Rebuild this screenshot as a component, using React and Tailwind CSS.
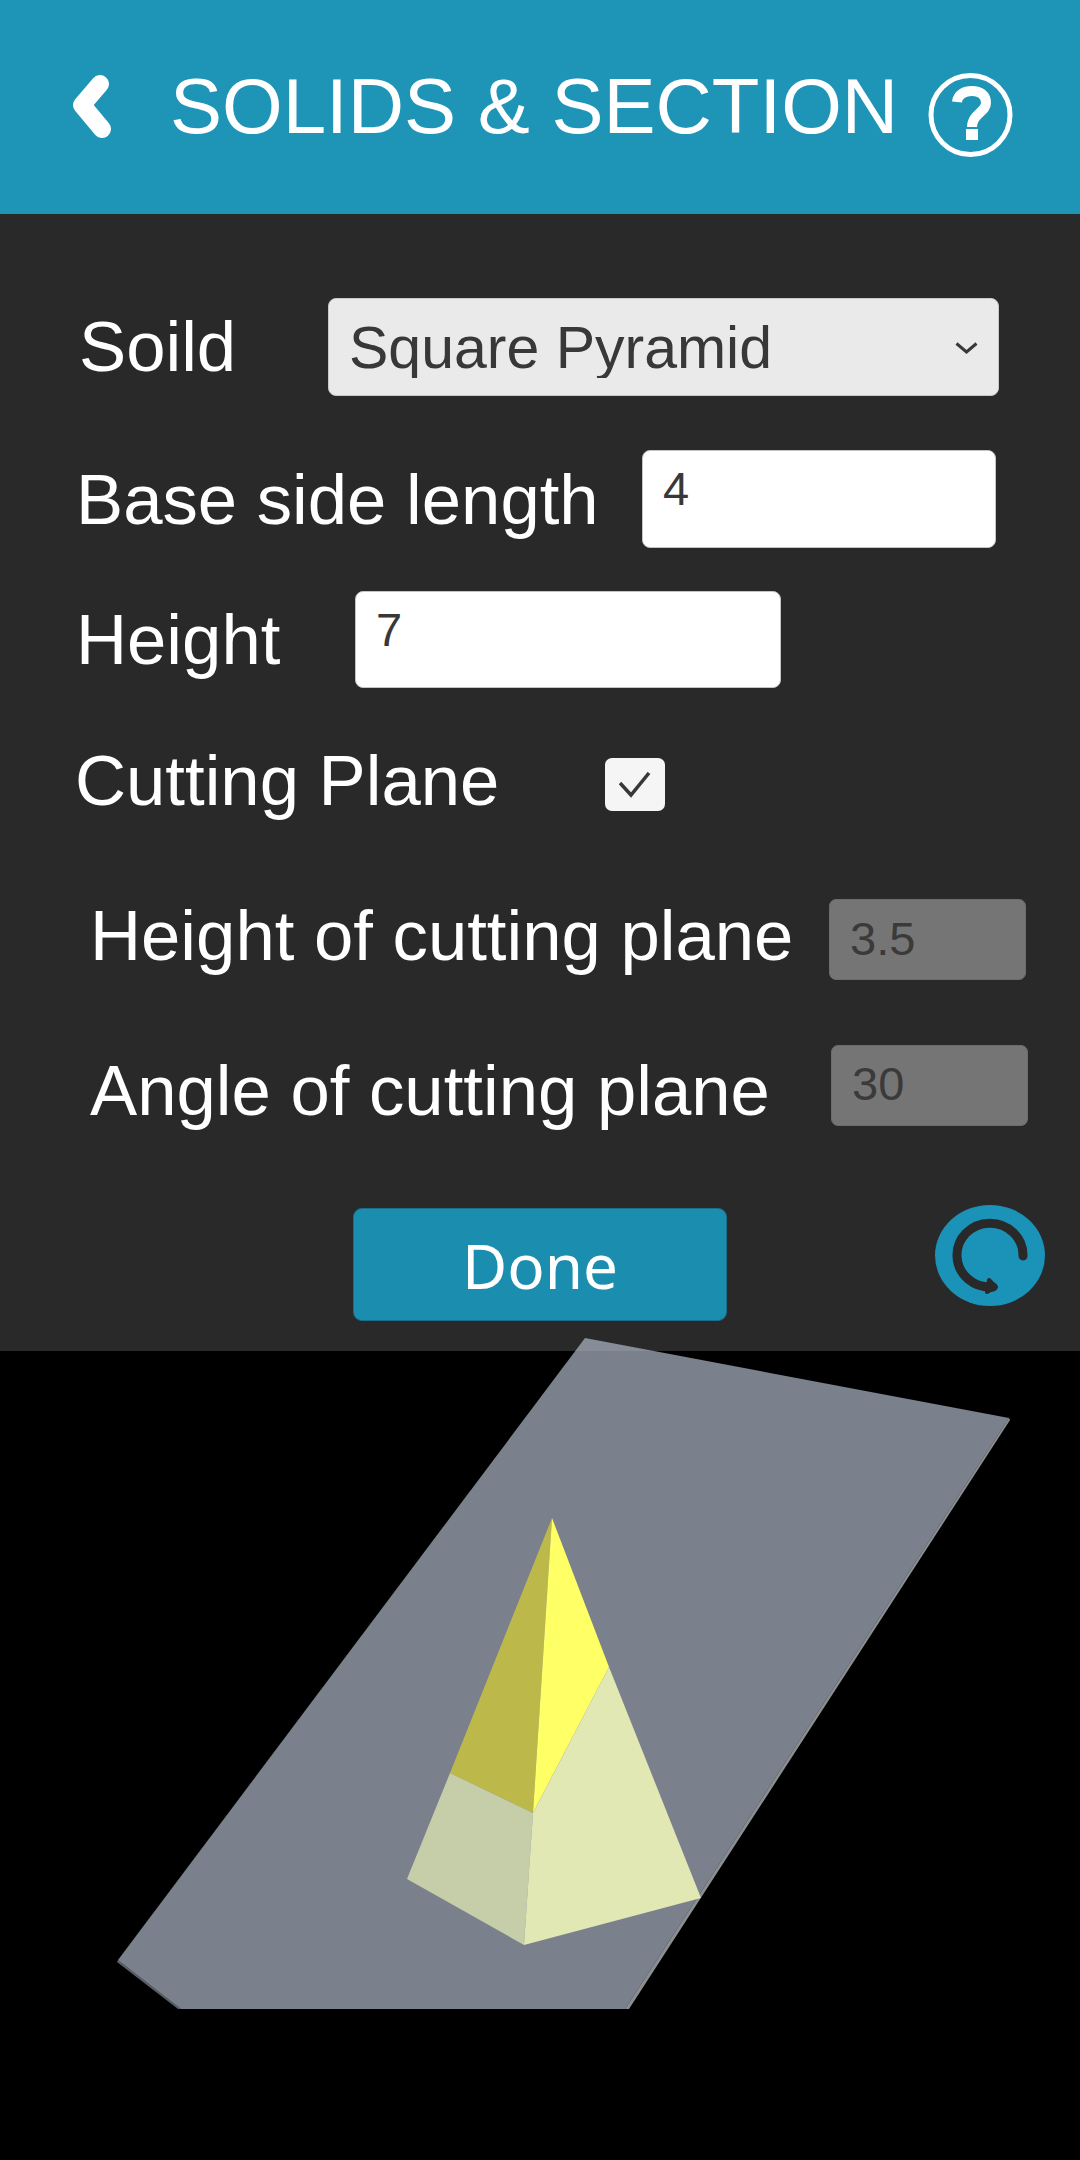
const fieldClass = "rounded-[8px] border border-[#c4c4c4] bg-white pl-[20px] text-[47px] leading-none text-[#383838] outline-none";
const disabledClass = "h-[81px] w-[197px] rounded-[7px] border border-[#6c6c6c] bg-[#757575] pl-[20px] text-[47px] leading-none text-[#3a3a3a] outline-none";

function BackIcon() {
  return (
    <svg className="ml-[70px] h-[70px] w-[44px] shrink-0" viewBox="0 0 44 70" fill="none">
      <path d="M30 12 L12 33 L32 57" stroke="#fff" strokeWidth="18" strokeLinecap="round" strokeLinejoin="round" />
    </svg>
  );
}

function HelpIcon() {
  return (
    <svg className="ml-[30px] mt-[16px] h-[85px] w-[85px] shrink-0" viewBox="0 0 85 85" fill="none">
      <circle cx="42.5" cy="42" r="39.5" stroke="#fff" strokeWidth="5" />
      <path d="M29 29 C30 21 37 18 44 18 C52 18 58 22 58 30 C58 39 44 41 44 54" stroke="#fff" strokeWidth="10" />
      <rect x="38" y="56" width="12" height="11" fill="#fff" />
    </svg>
  );
}

function ResetIcon() {
  return (
    <svg className="ml-[208px] mt-[-3px] h-[101px] w-[110px] shrink-0" viewBox="0 0 110 101" fill="none">
      <ellipse cx="55" cy="50.5" rx="55" ry="50.5" fill="#1b92b7" />
      <path d="M88 51 A33 32 0 1 0 58 82" stroke="#292929" strokeWidth="9" strokeLinecap="round" />
      <path d="M54 75 L61 82 L52 87 Z" fill="#292929" stroke="#292929" strokeWidth="4" strokeLinejoin="round" />
    </svg>
  );
}

function Scene() {
  return (
    <svg className="absolute left-0 top-[-13px] h-[680px] w-[1080px]" viewBox="0 1338 1080 680">
      <polygon points="118,1960 181,2009 178,2009 117,1962" fill="#5a5e66" />
      <polygon points="1009,1418 1010,1420 629,2009 625,2009" fill="#8b8e90" />
      <polygon points="585,1338 1009,1418 625,2009 181,2009 118,1960" fill="rgb(174,183,200)" fillOpacity="0.7" />
      <polygon points="552,1518 450,1773 533,1813" fill="#bdb84a" />
      <polygon points="552,1518 609,1667 533,1813" fill="#ffff66" />
      <polygon points="450,1773 533,1813 524,1945 407,1879" fill="#c6cda9" />
      <polygon points="533,1813 609,1667 701,1898 524,1945" fill="#e1e8b4" />
    </svg>
  );
}

export default function App() {
  return (
    <div className="flex min-h-[2160px] flex-col bg-black font-['Liberation_Sans',Arial,sans-serif] text-white">
      <header className="flex h-[214px] items-center bg-[#1e94b7]">
        <BackIcon />
        <h1 className="ml-[56px] pb-[2px] text-[78px] font-normal leading-none whitespace-nowrap">SOLIDS &amp; SECTION</h1>
        <HelpIcon />
      </header>

      <section className="bg-[#292929] pb-[30px] pt-[84px] text-[70.7px] leading-none">
        <div className="flex h-[98px] items-center">
          <span className="ml-[79px] w-[249px]">Soild</span>
          <div className="relative h-[98px] w-[671px]">
            <select defaultValue="Square Pyramid" className="h-full w-full appearance-none rounded-[8px] border border-[#c8c8c8] bg-[#eaeaea] pl-[20px] pt-[2px] text-[59px] leading-none text-[#383838] outline-none">
              <option>Square Pyramid</option>
            </select>
            <svg className="absolute right-[21px] top-[44px] h-[12px] w-[23px]" viewBox="0 0 23 12" fill="none">
              <path d="M1.5 1.5 L11.5 10 L21.5 1.5" stroke="#383838" strokeWidth="3" />
            </svg>
          </div>
        </div>

        <div className="mt-[54px] flex h-[98px] items-center">
          <span className="ml-[76px] w-[566px] whitespace-nowrap pt-[2px]">Base side length</span>
          <input readOnly value="4" className={`${fieldClass} h-[98px] w-[354px] pb-[22px]`} />
        </div>

        <div className="mt-[43px] flex h-[97px] items-center">
          <span className="ml-[76px] w-[279px] pt-[2px]">Height</span>
          <input readOnly value="7" className={`${fieldClass} h-[97px] w-[426px] pb-[20px]`} />
        </div>

        <div className="mt-[70px] flex h-[53px] items-center">
          <span className="ml-[75px] w-[530px] whitespace-nowrap pb-[6px]">Cutting Plane</span>
          <div className="flex h-[53px] w-[60px] items-center justify-center rounded-[7px] bg-[#f5f5f5]">
            <svg className="h-[26px] w-[32px]" viewBox="0 0 32 26" fill="none">
              <path d="M1 11 L12 23 L30 1" stroke="#383838" strokeWidth="3.5" />
            </svg>
          </div>
        </div>

        <div className="mt-[88px] flex h-[81px] items-center">
          <span className="ml-[90px] w-[739px] whitespace-nowrap pb-[6px]">Height of cutting plane</span>
          <input readOnly disabled value="3.5" className={`${disabledClass} pb-[2px]`} />
        </div>

        <div className="mt-[65px] flex h-[81px] items-center">
          <span className="ml-[90px] w-[741px] whitespace-nowrap pt-[12px]">Angle of cutting plane</span>
          <input readOnly disabled value="30" className={`${disabledClass} pb-[4px]`} />
        </div>

        <div className="mt-[82px] flex h-[113px] items-start">
          <button className="ml-[353px] h-[113px] w-[374px] rounded-[9px] border border-[#1a6f8a] bg-[#1b8eb0] font-['Noto_Sans',sans-serif] text-[62px] leading-none text-white">
            Done
          </button>
          <ResetIcon />
        </div>
      </section>

      <div className="relative flex-1">
        <Scene />
      </div>
    </div>
  );
}
